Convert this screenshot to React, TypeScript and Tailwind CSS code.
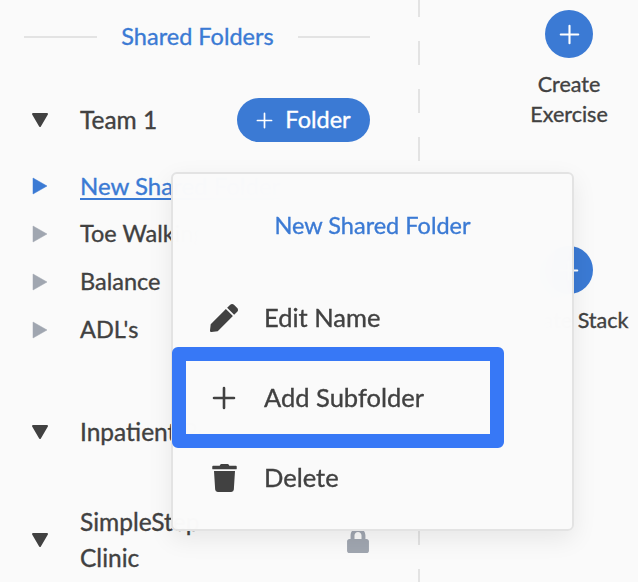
import { FaPen, FaTrash, FaLock } from "react-icons/fa";

function Tri({ dir, color }: { dir: "down" | "right"; color: string }) {
  return dir === "down" ? (
    <svg width="18" height="16" viewBox="0 0 18 16" className="shrink-0">
      <path d="M2 2 H16 L9 14 Z" fill={color} stroke={color} strokeWidth="2" strokeLinejoin="round" />
    </svg>
  ) : (
    <svg width="16" height="18" viewBox="0 0 16 18" className="shrink-0">
      <path d="M1 1 L15 9 L1 17 Z" fill={color} stroke={color} strokeWidth="0.5" strokeLinejoin="round" />
    </svg>
  );
}

function PlusIcon({ size, stroke = "#ffffff", w = 2.4 }: { size: number; stroke?: string; w?: number }) {
  return (
    <svg width={size} height={size} viewBox="0 0 24 24" className="shrink-0">
      <path d="M12 2 V22 M2 12 H22" stroke={stroke} strokeWidth={w} strokeLinecap="round" fill="none" />
    </svg>
  );
}

function SubRow({ label, color, active }: { label: string; color: string; active?: boolean }) {
  return (
    <div className="flex h-12 items-center">
      <div className="flex w-[56px] pl-2"><Tri dir="right" color={color} /></div>
      <span className={active ? "whitespace-nowrap text-[24px] text-[#3b7ad4] underline underline-offset-3" : "whitespace-nowrap text-[23.5px]"}>{label}</span>
    </div>
  );
}

function MenuItem({ icon, label }: { icon: React.ReactNode; label: string }) {
  return (
    <div className="flex h-20 items-center">
      <div className="flex w-[91px] justify-center pl-[11px]">{icon}</div>
      <span className="pb-[2px] text-[25.5px]">{label}</span>
    </div>
  );
}

function Action({ label }: { label: string }) {
  return (
    <div className="flex flex-col items-center text-center text-[21.5px] leading-[30px]">
      <div className="flex h-12 w-12 items-center justify-center rounded-full bg-[#3b7ad4]">
        <PlusIcon size={21} />
      </div>
      <div className="mt-[11px] whitespace-pre-line">{label}</div>
    </div>
  );
}

export default function App() {
  return (
    <div className="relative flex h-[582px] w-[638px] overflow-hidden bg-[#fafafa] font-['Lato','Liberation_Sans',sans-serif] text-[24.5px] text-[#414141] [-webkit-text-stroke:0.35px]">
      <div className="w-[418px] shrink-0 pl-6 pr-12">
        <div className="flex h-[74px] items-center justify-between">
          <div className="h-[2px] w-[73px] bg-[#e3e3e3]" />
          <span className="text-[23.5px] text-[#3b7ad4]">Shared Folders</span>
          <div className="h-[2px] w-[72px] bg-[#e3e3e3]" />
        </div>
        <div className="mt-6 flex h-11 items-center justify-between">
          <div className="flex items-center">
            <div className="flex w-[56px] pl-[7px]"><Tri dir="down" color="#414141" /></div>
            <span>Team 1</span>
          </div>
          <div className="flex h-11 w-[133px] items-center justify-center gap-3 rounded-full bg-[#3b7ad4] text-[23.5px] text-white">
            <PlusIcon size={17} />
            <span>Folder</span>
          </div>
        </div>
        <div className="mt-5">
          <SubRow label="New Shared Folder" color="#3b7ad4" active />
          <SubRow label="Toe Walking" color="#a0a6b0" />
          <SubRow label="Balance" color="#a0a6b0" />
          <SubRow label="ADL's" color="#a0a6b0" />
        </div>
        <div className="mt-[54px] flex h-12 items-center">
          <div className="flex w-[56px] pl-[7px]"><Tri dir="down" color="#414141" /></div>
          <span className="whitespace-nowrap">Inpatient Rehabilitation</span>
        </div>
        <div className="mt-12 flex h-[72px] items-center justify-between">
          <div className="flex items-center">
            <div className="flex w-[56px] pl-[7px]"><Tri dir="down" color="#414141" /></div>
            <span className="leading-9">SimpleStep<br />Clinic</span>
          </div>
          <FaLock className="mr-[1px] h-[25px] w-[22px] text-[#a0a6b0]" />
        </div>
      </div>
      <div className="h-full w-[2px] shrink-0 bg-[repeating-linear-gradient(to_bottom,#e3e3e3_0px,#e3e3e3_24px,transparent_24px,transparent_48px)] bg-[position:0_-7px]" />
      <div className="flex flex-1 flex-col items-center pl-[80px] pt-[10px]">
        <Action label={"Create\nExercise"} />
        <div className="mt-[117px]"><Action label="Create Stack" /></div>
      </div>

      <div className="absolute left-[171px] top-[172px] h-[359px] w-[403px] rounded-md border-2 border-[#e3e3e3] bg-[#fafafa]/[0.98] shadow-[0_8px_24px_rgba(0,0,0,0.08)] backdrop-blur-xl">
        <div className="flex h-[104px] items-center justify-center text-[23.5px] text-[#3b7ad4]">New Shared Folder</div>
        <MenuItem icon={<FaPen className="h-[28px] w-[28px]" />} label="Edit Name" />
        <MenuItem icon={<PlusIcon size={24} stroke="#414141" w={2.6} />} label="Add Subfolder" />
        <MenuItem icon={<FaTrash className="h-[28px] w-[25px]" />} label="Delete" />
        <div className="absolute left-[-1px] top-[173px] h-[101px] w-[332px] rounded-md border-[14px] border-[#3778f6]" />
      </div>
    </div>
  );
}
